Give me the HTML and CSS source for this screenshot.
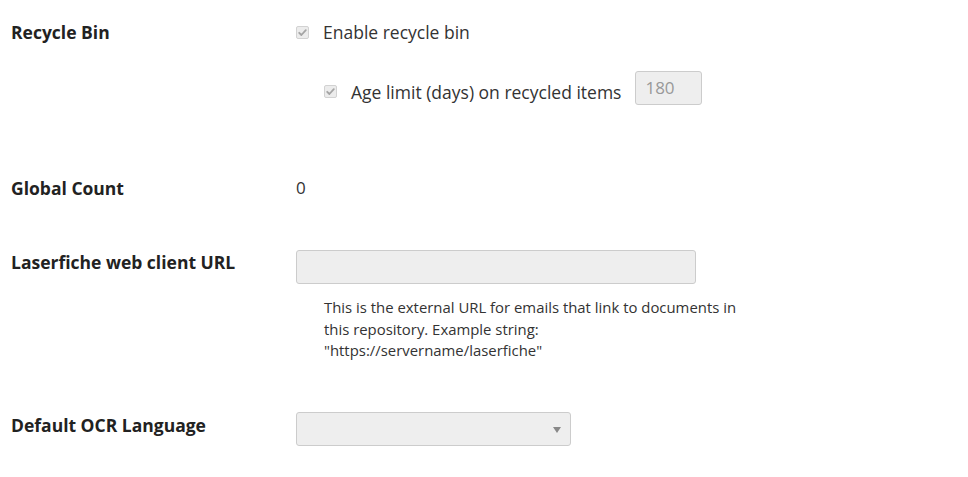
FILE: index.html
```html
<!DOCTYPE html>
<html>
<head>
<meta charset="utf-8">
<link rel="stylesheet" href="styles.css">
</head>
<body>
<div class="page">
  <div class="row row-recycle">
    <div class="label">Recycle Bin</div>
    <div class="field">
      <div class="check-line">
        <span class="cb"><svg viewBox="0 0 13 13" width="13" height="13"><path d="M3.2 6.8 L5.4 9 L9.8 4.2" fill="none" stroke="#a4a4a4" stroke-width="1.8" stroke-linecap="round" stroke-linejoin="round"/></svg></span>
        <span class="cb-text">Enable recycle bin</span>
      </div>
      <div class="sub-line">
        <span class="cb"><svg viewBox="0 0 13 13" width="13" height="13"><path d="M3.2 6.8 L5.4 9 L9.8 4.2" fill="none" stroke="#a4a4a4" stroke-width="1.8" stroke-linecap="round" stroke-linejoin="round"/></svg></span>
        <span class="cb-text sub-text">Age limit (days) on recycled items</span>
        <div class="input small-input">180</div>
      </div>
    </div>
  </div>
  <div class="row row-count">
    <div class="label">Global Count</div>
    <div class="field"><div class="value">0</div></div>
  </div>
  <div class="row row-url">
    <div class="label">Laserfiche web client URL</div>
    <div class="field">
      <div class="input url-input"></div>
      <p class="help">This is the external URL for emails that link to documents in this repository. Example string: "https://servername/laserfiche"</p>
    </div>
  </div>
  <div class="row row-ocr">
    <div class="label">Default OCR Language</div>
    <div class="field">
      <div class="input select-input"><span class="arrow"></span></div>
    </div>
  </div>
</div>
</body>
</html>
```
FILE: styles.css
```css
html, body {
  margin: 0;
  padding: 0;
  background: #fff;
}
body {
  font-family: "Open Sans", "Liberation Sans", sans-serif;
  color: #333;
}
.page {
  padding: 17px 0 0 11px;
}
.row {
  display: flex;
  align-items: flex-start;
}
.label {
  width: 285px;
  flex: none;
  font-weight: 700;
  font-size: 17.5px;
  line-height: 30px;
  color: #222;
}
.field {
  flex: none;
}
.check-line {
  display: flex;
  align-items: center;
  height: 30px;
}
.cb {
  width: 13px;
  height: 13px;
  box-sizing: border-box;
  border: 1px solid #d2d2d2;
  border-radius: 2px;
  background: #ececec;
  display: flex;
  flex: none;
}
.cb svg {
  display: block;
  margin: -1px;
}
.cb-text {
  font-size: 17.5px;
  margin-left: 14px;
  line-height: 30px;
}
.sub-line {
  display: flex;
  align-items: center;
  margin-top: 24px;
  margin-left: 28px;
  height: 34px;
}
.sub-line .cb {
  margin-top: 7px;
}
.sub-text {
  margin-top: 7px;
}
.input {
  box-sizing: border-box;
  height: 34px;
  background: #eeeeee;
  border: 1px solid #cccccc;
  border-radius: 3px;
}
.small-input {
  width: 67px;
  margin-left: 14px;
  padding-left: 9px;
  font-size: 17px;
  line-height: 32px;
  color: #999;
}
.row-count {
  margin-top: 68px;
}
.value {
  font-size: 17px;
  line-height: 30px;
}
.row-url {
  margin-top: 44px;
}
.url-input {
  width: 400px;
  margin-top: 3px;
}
.help {
  margin: 13px 0 0 28px;
  width: 420px;
  font-size: 14.9px;
  line-height: 21.5px;
  color: #333;
}
.row-ocr {
  margin-top: 48px;
}
.select-input {
  width: 275px;
  margin-top: 2px;
  position: relative;
}
.arrow {
  position: absolute;
  right: 9px;
  top: 14px;
  width: 0;
  height: 0;
  border-left: 4px solid transparent;
  border-right: 4px solid transparent;
  border-top: 6px solid #888;
}
```
